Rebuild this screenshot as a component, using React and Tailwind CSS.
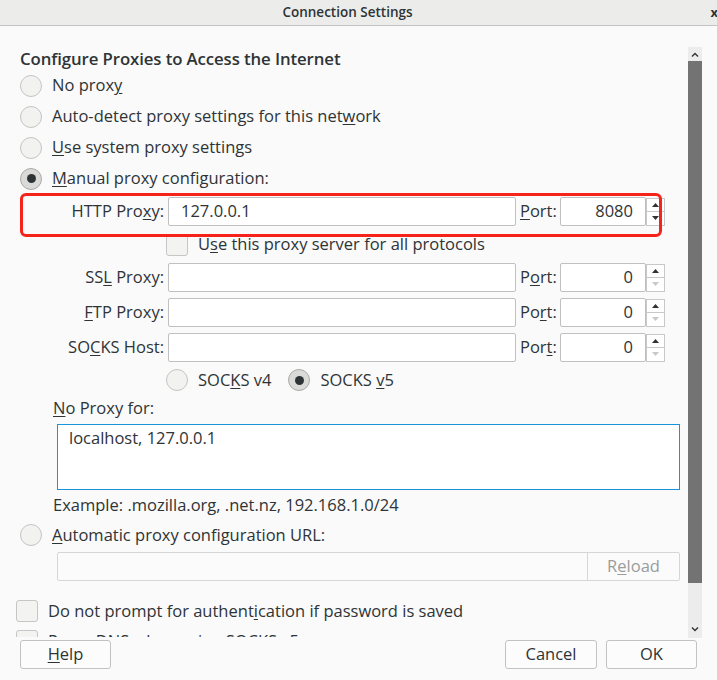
import React from "react";

function Radio({ checked }) {
  return (
    <span
      className={`w-[22px] h-[22px] rounded-full border flex items-center justify-center shrink-0 ${
        checked ? "bg-[#dadad8] border-[#a9a9a7]" : "bg-[#f2f2f1] border-[#c4c4c2]"
      }`}
    >
      {checked && <span className="w-[9px] h-[9px] rounded-full bg-[#2e3436]" />}
    </span>
  );
}

function Checkbox() {
  return <span className="w-[22px] h-[22px] rounded-[3px] border border-[#c6c6c4] bg-[#f3f3f2] shrink-0" />;
}

function Arrow({ up, dim }) {
  return (
    <svg width="7" height="4" viewBox="0 0 7 4">
      <path d={up ? "M0 4 L3.5 0 L7 4 Z" : "M0 0 L3.5 4 L7 0 Z"} fill={dim ? "#c8c8c8" : "#2e3436"} />
    </svg>
  );
}

function Spinner({ downDim }) {
  return (
    <div className="flex flex-col w-[19px] h-[29px] justify-center">
      <div className="h-[14px] border border-[#c8c8c8] bg-white flex items-center justify-center">
        <Arrow up />
      </div>
      <div className="h-[14px] border border-t-0 border-[#c8c8c8] bg-white flex items-center justify-center">
        <Arrow dim={downDim} />
      </div>
    </div>
  );
}

function ProxyRow({ label, value, portLabel, port, downDim, className = "" }) {
  return (
    <div className={`flex items-center h-[29px] ${className}`}>
      <div className="w-[165px] text-right pr-[1px] whitespace-nowrap">{label}</div>
      <div className="ml-[3px] w-[348px] h-[29px] border border-[#c0c0c0] rounded-[2px] bg-white flex items-center px-[12px]">
        {value}
      </div>
      <div className="ml-[4px] w-[37px] whitespace-nowrap">{portLabel}</div>
      <div className="ml-[3px] w-[86px] h-[29px] border border-[#c0c0c0] rounded-[2px] bg-white flex items-center justify-end pr-[12px]">
        {port}
      </div>
      <Spinner downDim={downDim} />
    </div>
  );
}

export default function App() {
  return (
    <div
      className="w-[717px] h-[680px] bg-[#fafafa] text-[#2e3436] text-[16.5px] flex flex-col overflow-hidden"
      style={{ fontFamily: '"Open Sans", "Noto Sans", sans-serif' }}
    >
      <div className="h-[26px] shrink-0 bg-[#ececeb] border-b border-[#c3c3c1] flex items-center justify-center pr-[22px] relative">
        <span className="text-[13.5px] font-semibold text-[#2e3436]">Connection Settings</span>
        <span className="absolute right-[-1px] top-[3px] text-[13px] font-bold">x</span>
      </div>

      <div className="flex h-[611px] shrink-0">
        <div className="flex-1 overflow-hidden">
          <div className="pt-[21px] pl-[20px]">
            <div className="h-[23px] text-[16.8px] font-semibold leading-[23px] tracking-[-0.1px]">
              Configure Proxies to Access the Internet
            </div>
            <div className="flex items-center h-[31px] gap-[10px]">
              <Radio />
              <span>No prox<u className="underline-offset-2">y</u></span>
            </div>
            <div className="flex items-center h-[31px] gap-[10px]">
              <Radio />
              <span>Auto-detect proxy settings for this net<u className="underline-offset-2">w</u>ork</span>
            </div>
            <div className="flex items-center h-[31px] gap-[10px]">
              <Radio />
              <span><u className="underline-offset-2">U</u>se system proxy settings</span>
            </div>
            <div className="flex items-center h-[31px] gap-[10px]">
              <Radio checked />
              <span><u className="underline-offset-2">M</u>anual proxy configuration:</span>
            </div>
          </div>

          <div className="relative mt-[3px]">
            <ProxyRow
              label={<>HTTP Pro<u className="underline-offset-2">x</u>y:</>}
              value="127.0.0.1"
              portLabel={<><u className="underline-offset-2">P</u>ort:</>}
              port="8080"
            />
            <div className="absolute left-[20px] top-[-4px] w-[642px] h-[44px] border-[3.5px] border-[#f5231a] rounded-[6px]" />
          </div>

          <div className="flex items-center h-[37px] pl-[166px] gap-[10px]">
            <Checkbox />
            <span>U<u className="underline-offset-2">s</u>e this proxy server for all protocols</span>
          </div>

          <ProxyRow
            label={<>SS<u className="underline-offset-2">L</u> Proxy:</>}
            value=""
            portLabel={<>P<u className="underline-offset-2">o</u>rt:</>}
            port="0"
            downDim
          />
          <ProxyRow
            className="mt-[6px]"
            label={<><u className="underline-offset-2">F</u>TP Proxy:</>}
            value=""
            portLabel={<>Po<u className="underline-offset-2">r</u>t:</>}
            port="0"
            downDim
          />
          <ProxyRow
            className="mt-[6px]"
            label={<>SO<u className="underline-offset-2">C</u>KS Host:</>}
            value=""
            portLabel={<>Por<u className="underline-offset-2">t</u>:</>}
            port="0"
            downDim
          />

          <div className="flex items-center h-[36px] pl-[166px]">
            <Radio />
            <span className="ml-[10px]">SOC<u className="underline-offset-2">K</u>S v4</span>
            <span className="ml-[17px]"><Radio checked /></span>
            <span className="ml-[10px]">SOCKS <u className="underline-offset-2">v</u>5</span>
          </div>

          <div className="h-[20px] flex items-center pl-[53px]">
            <span><u className="underline-offset-2">N</u>o Proxy for:</span>
          </div>
          <div className="ml-[57px] mt-[6px] w-[623px] h-[66px] border border-[#1a93dd] bg-white px-[11px] pt-[1px]">
            localhost, 127.0.0.1
          </div>
          <div className="h-[30px] flex items-center pl-[53px]">
            Example: .mozilla.org, .net.nz, 192.168.1.0/24
          </div>
          <div className="flex items-center h-[30px] pl-[20px] gap-[10px]">
            <Radio />
            <span><u className="underline-offset-2">A</u>utomatic proxy configuration URL:</span>
          </div>
          <div className="ml-[57px] mt-[2px] w-[623px] h-[29px] flex border border-[#d6d6d4] rounded-[2px] bg-[#fbfbfb]">
            <div className="flex-1" />
            <div className="w-[92px] border-l border-[#d6d6d4] flex items-center justify-center text-[#9a9d9c]">
              R<u className="underline-offset-2">e</u>load
            </div>
          </div>

          <div className="flex items-center h-[30px] mt-[15px] pl-[16px] gap-[10px]">
            <Checkbox />
            <span>Do not prompt for authent<u className="underline-offset-2">i</u>cation if password is saved</span>
          </div>
          <div className="flex items-center h-[30px] pl-[16px] gap-[10px]">
            <Checkbox />
            <span>Proxy <u className="underline-offset-2">D</u>NS when using SOCKS v5</span>
          </div>
        </div>

        <div className="w-[14px] mr-[15px] mt-[21px] mb-[-1px] flex flex-col bg-[#ececec]">
          <div className="h-[14px] flex items-center justify-center">
            <svg width="8" height="5" viewBox="0 0 8 5">
              <path d="M1 4.5 L4 1.5 L7 4.5" stroke="#2e3436" strokeWidth="1.4" fill="none" />
            </svg>
          </div>
          <div className="h-[522px] bg-[#737373]" />
          <div className="flex-1 flex items-end justify-center pb-[6px]">
            <svg width="8" height="5" viewBox="0 0 8 5">
              <path d="M1 0.5 L4 3.5 L7 0.5" stroke="#2e3436" strokeWidth="1.4" fill="none" />
            </svg>
          </div>
        </div>
      </div>

      <div className="flex items-start pt-[3px] px-[20px]">
        <button className="w-[91px] h-[29px] border border-[#c2c2c0] rounded-[3px] bg-[#fcfcfc] text-[16.5px] text-[#2e3436]">
          <u className="underline-offset-2">H</u>elp
        </button>
        <div className="flex-1" />
        <button className="w-[92px] h-[29px] border border-[#c2c2c0] rounded-[3px] bg-[#fcfcfc] text-[16.5px] text-[#2e3436]">
          Cancel
        </button>
        <button className="ml-[9px] w-[91px] h-[29px] border border-[#c2c2c0] rounded-[3px] bg-[#fcfcfc] text-[16.5px] text-[#2e3436]">
          OK
        </button>
      </div>
    </div>
  );
}
